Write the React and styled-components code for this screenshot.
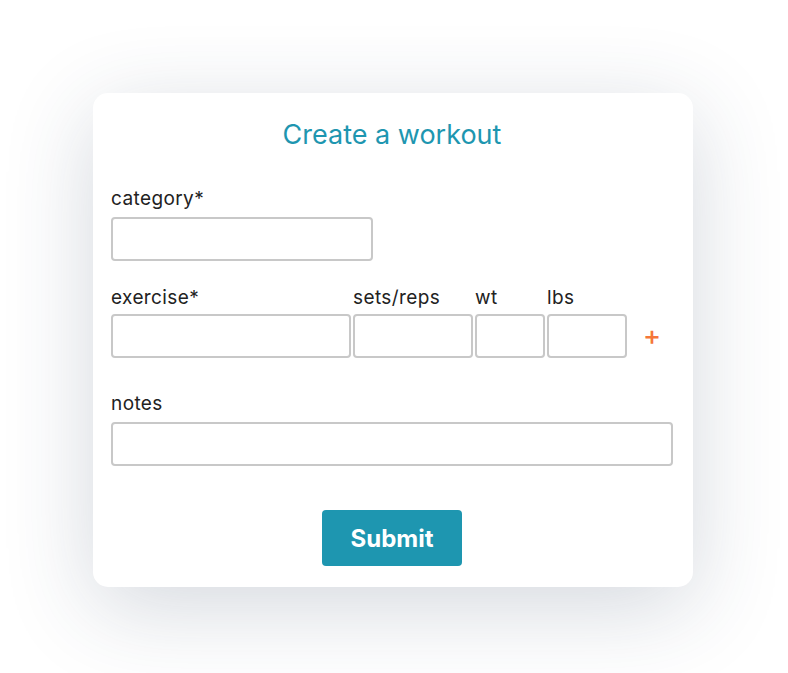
import React from "react";
import styled, { createGlobalStyle } from "styled-components";

const Global = createGlobalStyle`
  html, body { margin: 0; padding: 0; background: #ffffff; }
  body { font-family: Inter, "Noto Sans", sans-serif; }
  * { box-sizing: border-box; }
`;

const Page = styled.div`
  display: flex;
  justify-content: flex-start;
  padding: 93px 0 0 93px;
  min-height: 673px;
`;

const Card = styled.form`
  width: 600px;
  height: 494px;
  background: #ffffff;
  border-radius: 15px;
  box-shadow: 0 20px 90px rgba(40, 60, 90, 0.2);
  padding: 22px 20px 0 18px;
  display: flex;
  flex-direction: column;
`;

const Title = styled.h1`
  margin: 0;
  text-align: center;
  font-size: 27px;
  font-weight: 400;
  line-height: 40px;
  color: #1e96b0;
`;

const Field = styled.div`
  display: flex;
  flex-direction: column;
  margin-top: ${(p) => p.$top}px;
`;

const Label = styled.label`
  font-size: 19px;
  letter-spacing: 0.4px;
  line-height: 22px;
  color: #222222;
  margin-bottom: ${(p) => p.$gap ?? 7}px;
`;

const Input = styled.input`
  width: ${(p) => p.$w}px;
  height: 44px;
  border: 2px solid #c8c8c8;
  border-radius: 4px;
  background: #fff;
  font: inherit;
  padding: 0 8px;
  outline: none;
`;

const Row = styled.div`
  display: flex;
  align-items: flex-end;
  gap: 2px;
  margin-top: ${(p) => p.$top}px;
`;

const Col = styled.div`
  display: flex;
  flex-direction: column;
`;

const Plus = styled.button`
  border: none;
  background: none;
  color: #f5773a;
  font-family: inherit;
  font-size: 27px;
  font-weight: 500;
  line-height: 44px;
  height: 44px;
  padding: 0;
  margin-left: 14px;
  cursor: pointer;
`;

const Actions = styled.div`
  display: flex;
  justify-content: center;
  margin-top: 44px;
`;

const Submit = styled.button`
  width: 140px;
  height: 56px;
  border: none;
  border-radius: 4px;
  background: #1e96b0;
  color: #ffffff;
  font-family: inherit;
  font-size: 24px;
  font-weight: 700;
  cursor: pointer;
`;

export default function App() {
  return (
    <>
      <Global />
      <Page>
        <Card onSubmit={(e) => e.preventDefault()}>
          <Title>Create a workout</Title>
          <Field $top={33}>
            <Label $gap={7}>category*</Label>
            <Input $w={262} />
          </Field>
          <Row $top={26}>
            <Col>
              <Label $gap={5}>exercise*</Label>
              <Input $w={240} />
            </Col>
            <Col>
              <Label $gap={5}>sets/reps</Label>
              <Input $w={120} />
            </Col>
            <Col>
              <Label $gap={5}>wt</Label>
              <Input $w={70} />
            </Col>
            <Col>
              <Label $gap={5}>lbs</Label>
              <Input $w={80} />
            </Col>
            <Plus type="button">+</Plus>
          </Row>
          <Field $top={35}>
            <Label $gap={7}>notes</Label>
            <Input $w={562} />
          </Field>
          <Actions>
            <Submit type="submit">Submit</Submit>
          </Actions>
        </Card>
      </Page>
    </>
  );
}
